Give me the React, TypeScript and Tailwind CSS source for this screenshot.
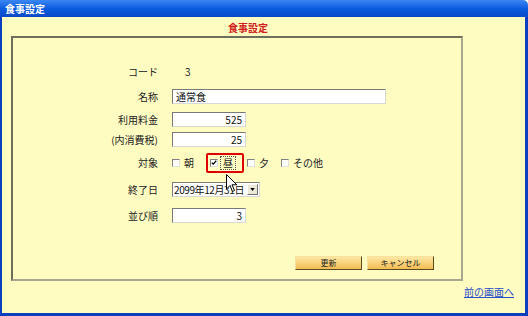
import React from "react";

const font = { fontFamily: '"Noto Sans CJK JP", "Liberation Sans", sans-serif' };

function Field({ width, value, align = "right" }: { width: number; value: string; align?: "left" | "right" }) {
  return (
    <div
      className={`h-[15px] bg-white border border-t-[#7a7a7a] border-l-[#7a7a7a] border-r-[#d8d8d8] border-b-[#d8d8d8] text-[10px] leading-[13px] px-[3px] text-[#111] ${
        align === "right" ? "text-right" : "text-left"
      }`}
      style={{ width }}
    >
      {value}
    </div>
  );
}

function Check({ checked = false }: { checked?: boolean }) {
  return (
    <span className="relative inline-block w-[8px] h-[8px] bg-white border border-t-[#808080] border-l-[#808080] border-r-[#e0e0e0] border-b-[#e0e0e0]">
      {checked && (
        <svg viewBox="0 0 8 8" className="absolute left-0 top-0 w-[6px] h-[6px]">
          <path d="M1 3.5 L3 5.5 L7 1" stroke="#000" strokeWidth="1.6" fill="none" />
        </svg>
      )}
    </span>
  );
}

function Row({ label, mt, children }: { label: string; mt: number; children: React.ReactNode }) {
  return (
    <div className="flex items-center h-[15px]" style={{ marginTop: mt }}>
      <div className="w-[145px] text-right text-[10px] leading-[15px] text-[#222]">{label}</div>
      <div className="ml-[14px] flex items-center">{children}</div>
    </div>
  );
}

function Btn({ label }: { label: string }) {
  return (
    <button className="w-[67px] h-[14px] text-[8px] leading-[12px] text-[#222] bg-gradient-to-b from-[#fde7a0] to-[#f3bd52] border border-t-[#f8e0a0] border-l-[#f8e0a0] border-r-[#5a4a20] border-b-[#5a4a20]">
      {label}
    </button>
  );
}

export default function App() {
  return (
    <div className="w-[528px] h-[316px] flex flex-col overflow-hidden relative" style={font}>
      {/* title bar */}
      <div className="h-[17px] shrink-0 flex items-center pl-[5px] bg-gradient-to-b from-[#3a86f4] via-[#0b5ddf] to-[#0a49c8] rounded-tr-[5px]">
        <span className="text-white font-bold text-[10px] leading-none">食事設定</span>
      </div>

      <div className="flex-1 flex flex-col bg-[#fffcc2] border-l-[2px] border-r-[3px] border-b-[3px] border-[#0a3fc0]">
        <div className="h-[19px] shrink-0 flex items-center pl-[226px] pt-[2px]">
          <span className="text-[#d02020] font-bold text-[10px] leading-none">食事設定</span>
        </div>

        <div className="ml-[9px] w-[452px] h-[245px] border-2 border-t-[#6e6e5a] border-l-[#6e6e5a] border-r-[#a8a890] border-b-[#a8a890] flex flex-col">
          <Row label="コード" mt={26}>
            <span className="text-[10px] ml-[13px] text-[#222]">3</span>
          </Row>
          <Row label="名称" mt={10}>
            <Field width={214} value="通常食" align="left" />
          </Row>
          <Row label="利用料金" mt={8}>
            <Field width={74} value="525" />
          </Row>
          <Row label="(内消費税)" mt={5}>
            <Field width={74} value="25" />
          </Row>
          <Row label="対象" mt={8}>
            <div className="flex items-center text-[10px] leading-[15px] text-[#222]">
              <Check />
              <span className="ml-[4px]">朝</span>
              <div className="ml-[12px] w-[38px] h-[20px] border-2 border-[#e00000] rounded-[2px] flex items-center pl-[2px]">
                <Check checked />
                <span className="ml-[2px] px-[2px] border border-dotted border-[#555] leading-[12px]">昼</span>
              </div>
              <span className="ml-[3px] flex"><Check /></span>
              <span className="ml-[4px]">夕</span>
              <span className="ml-[12px] flex"><Check /></span>
              <span className="ml-[4px]">その他</span>
            </div>
          </Row>
          <Row label="終了日" mt={12}>
            <div className="w-[88px] h-[15px] bg-white border border-t-[#7a7a7a] border-l-[#7a7a7a] border-r-[#d8d8d8] border-b-[#d8d8d8] flex items-center">
              <span className="flex-1 whitespace-nowrap overflow-hidden text-[10px] tracking-[-0.4px] leading-[13px] pl-[1px] text-[#111]">2099年12月31日</span>
              <span className="shrink-0 w-[11px] h-[11px] mr-[1px] bg-[#ece9d8] border border-t-white border-l-white border-r-[#707070] border-b-[#707070] flex items-center justify-center">
                <svg viewBox="0 0 6 4" className="w-[5px] h-[3px]">
                  <path d="M0 0 H6 L3 4 Z" fill="#000" />
                </svg>
              </span>
            </div>
          </Row>
          <Row label="並び順" mt={11}>
            <Field width={74} value="3" />
          </Row>
          <div className="flex gap-[5px] ml-[282px] mt-[33px]">
            <Btn label="更新" />
            <Btn label="キャンセル" />
          </div>
        </div>

        <div className="flex justify-end pr-[11px] mt-[4px]">
          <a className="text-[10px] leading-[13px] text-[#2a4ec8] underline">前の画面へ</a>
        </div>
      </div>

      {/* mouse cursor */}
      <svg viewBox="0 0 12 19" className="absolute left-[226px] top-[174px] w-[12px] h-[19px]">
        <path d="M0.5 0.5 V15 L4 11.5 L6.5 17.5 L8.5 16.5 L6 10.8 H10.8 Z" fill="#fff" stroke="#000" strokeWidth="1" />
      </svg>
    </div>
  );
}
